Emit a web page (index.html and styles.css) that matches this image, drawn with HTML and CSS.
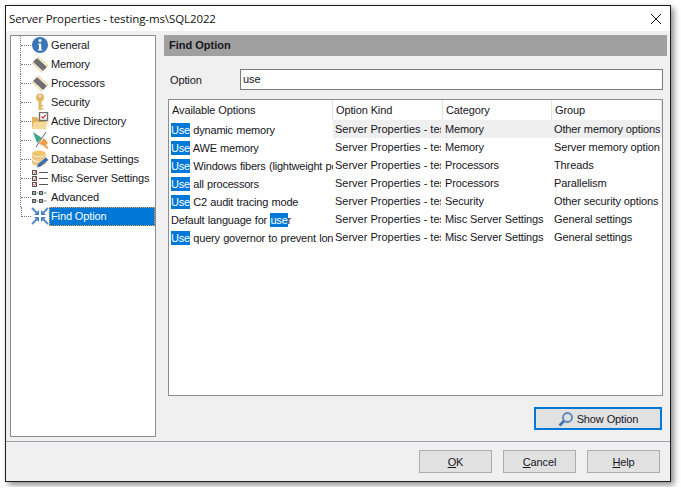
FILE: index.html

```html
<!DOCTYPE html>
<html lang="en">
<head>
  <meta charset="UTF-8">
  <title>Server Properties</title>
  <link rel="stylesheet" href="styles.css">
</head>
<body>
  <div class="window">
    <div class="titlebar">
      <span>Server Properties - testing-ms\SQL2022</span>
      <svg class="close" width="12" height="12" viewBox="0 0 12 12"><path d="M1 1 L11 11 M11 1 L1 11" stroke="#111" stroke-width="1" fill="none"/></svg>
    </div>
    <div class="main">
      <ul class="tree">
        <li class="node"><i class="twig"></i>
          <svg class="icon" viewBox="0 0 18 18"><circle cx="9" cy="9" r="8" fill="#3a76b6"/><circle cx="9" cy="4.600" r="1.500" fill="#fff"/><path d="M7 7.400h3.200v6h1.200v1.200H6.800v-1.200H8v-4.800H7z" fill="#fff"/></svg>
          <span class="label">General</span></li>
        <li class="node"><i class="twig"></i>
          <svg class="icon" viewBox="0 0 18 18"><path d="M2 7L6 3L16 12L12 16Z" fill="#6f6f72"/><path d="M1.500 8L6 12.500L11 17M7 2L12 6.500L17 11" stroke="#e6c06c" stroke-width="1.500" stroke-dasharray="1.200 .8" fill="none"/></svg>
          <span class="label">Memory</span></li>
        <li class="node"><i class="twig"></i>
          <svg class="icon" viewBox="0 0 18 18"><path d="M2 7L6 3L16 12L12 16Z" fill="#6f6f72"/><path d="M1.500 8L6 12.500L11 17M7 2L12 6.500L17 11" stroke="#e6c06c" stroke-width="1.500" stroke-dasharray="1.200 .8" fill="none"/></svg>
          <span class="label">Processors</span></li>
        <li class="node"><i class="twig"></i>
          <svg class="icon" viewBox="0 0 18 18"><circle cx="9" cy="4.500" r="4" fill="#e2b566"/><rect x="7.500" y="7" width="3" height="10" fill="#e2b566"/><rect x="10.500" y="12" width="2" height="1.500" fill="#e2b566"/><rect x="10.500" y="15" width="2" height="1.500" fill="#e2b566"/><rect x="7.600" y="2.400" width="2.800" height="1.400" fill="#fff"/></svg>
          <span class="label">Security</span></li>
        <li class="node"><i class="twig"></i>
          <svg class="icon" viewBox="0 0 18 18"><path d="M1 5h5l1.500 2H15v10H1z" fill="#e0b45c"/><path d="M2.500 10H17l-2.500 7H1z" fill="#f6d898"/><rect x="8.500" y="0.500" width="8" height="8" fill="#fff" stroke="#707070" stroke-width="1.400"/><path d="M10.500 4.500l1.500 1.500L14.800 2.800" stroke="#c8352b" stroke-width="1.200" fill="none"/></svg>
          <span class="label">Active Directory</span></li>
        <li class="node"><i class="twig"></i>
          <svg class="icon" viewBox="0 0 18 18"><path d="M2 1L11 7L6 12Z" fill="#3fa587"/><path d="M8 13L13 7L17 12L14 15Z" fill="#f09a48"/><path d="M13 14l4 3.500" stroke="#f09a48" stroke-width="1.800"/><path d="M15 1L5 16" stroke="#666" stroke-width="1"/></svg>
          <span class="label">Connections</span></li>
        <li class="node"><i class="twig"></i>
          <svg class="icon" viewBox="0 0 18 18"><ellipse cx="8" cy="3.500" rx="7" ry="3" fill="#f2c46a"/><path d="M1 4v9c0 1.600 3 3 7 3s7-1.400 7-3V4c0 1.600-3 3-7 3S1 5.600 1 4z" fill="#ecc887"/><path d="M1 8.500c0 1.600 3 3 7 3" stroke="#fff" fill="none"/><path d="M6 17.500l1-3.500 8-6.500 2.500 2.500-8 6.500z" fill="#3a6fb0"/></svg>
          <span class="label">Database Settings</span></li>
        <li class="node"><i class="twig"></i>
          <svg class="icon" viewBox="0 0 18 18"><g fill="#fff" stroke="#555"><rect x="1.500" y="1.500" width="4" height="4"/><rect x="1.500" y="7.500" width="4" height="4"/><rect x="1.500" y="13.500" width="4" height="4"/></g><path d="M2.500 3.500l1 1 2-3M2.500 9.500l1 1 2-3M2.500 15.500l1 1 2-3" stroke="#c8452f" fill="none"/><path d="M8 3.500h9M8 9.500h9M8 15.500h9" stroke="#555"/></svg>
          <span class="label">Misc Server Settings</span></li>
        <li class="node"><i class="twig"></i>
          <svg class="icon" viewBox="0 0 18 18"><g fill="#8fb5a0" stroke="#555"><rect x="1.500" y="3.500" width="3" height="3"/><rect x="8.500" y="3.500" width="3" height="3"/><rect x="1.500" y="11.500" width="3" height="3"/><rect x="8.500" y="11.500" width="3" height="3"/></g><path d="M5.500 5h2M12.500 5h3M5.500 13h2M12.500 13h3" stroke="#777"/></svg>
          <span class="label">Advanced</span></li>
        <li class="node"><i class="twig"></i>
          <svg class="icon" viewBox="0 0 18 18"><path d="M1 1L6 6M1 17L6 12M17 1L12 6M17 17L12 12" stroke="#5a8ec8" stroke-width="2"/><path d="M8 8H3L8 3ZM10 8H15L10 3ZM8 10H3L8 15ZM10 10H15L10 15Z" fill="#4f84c0"/></svg>
          <span class="label selected">Find Option</span></li>
      </ul>
      <div class="content">
        <h2 class="section-head">Find Option</h2>
        <div class="search-row">
          <label class="search-label">Option</label>
          <div class="search-input">use</div>
        </div>
        <div class="grid">
          <div class="row head">
            <div class="cell">Available Options</div>
            <div class="cell">Option Kind</div>
            <div class="cell">Category</div>
            <div class="cell">Group</div>
          </div>
          <div class="row current">
            <div class="cell first"><mark>Use</mark> dynamic memory</div>
            <div class="cell kind">Server Properties - testing-ms\SQL2022</div>
            <div class="cell">Memory</div>
            <div class="cell">Other memory options</div>
          </div>
          <div class="row">
            <div class="cell first"><mark>Use</mark> AWE memory</div>
            <div class="cell kind">Server Properties - testing-ms\SQL2022</div>
            <div class="cell">Memory</div>
            <div class="cell">Server memory options</div>
          </div>
          <div class="row">
            <div class="cell first"><mark>Use</mark> Windows fibers (lightweight pooling)</div>
            <div class="cell kind">Server Properties - testing-ms\SQL2022</div>
            <div class="cell">Processors</div>
            <div class="cell">Threads</div>
          </div>
          <div class="row">
            <div class="cell first"><mark>Use</mark> all processors</div>
            <div class="cell kind">Server Properties - testing-ms\SQL2022</div>
            <div class="cell">Processors</div>
            <div class="cell">Parallelism</div>
          </div>
          <div class="row">
            <div class="cell first"><mark>Use</mark> C2 audit tracing mode</div>
            <div class="cell kind">Server Properties - testing-ms\SQL2022</div>
            <div class="cell">Security</div>
            <div class="cell">Other security options</div>
          </div>
          <div class="row">
            <div class="cell first">Default language for <mark>use</mark>r</div>
            <div class="cell kind">Server Properties - testing-ms\SQL2022</div>
            <div class="cell">Misc Server Settings</div>
            <div class="cell">General settings</div>
          </div>
          <div class="row">
            <div class="cell first"><mark>Use</mark> query governor to prevent long-running queries</div>
            <div class="cell kind">Server Properties - testing-ms\SQL2022</div>
            <div class="cell">Misc Server Settings</div>
            <div class="cell">General settings</div>
          </div>
        </div>
        <div class="show-row">
          <button class="btn show-btn">
            <svg width="16" height="16" viewBox="0 0 16 16"><circle cx="9.500" cy="6.500" r="4.500" fill="none" stroke="#5a86b8" stroke-width="1.800"/><path d="M6 10L1.500 14.500" stroke="#3f72ad" stroke-width="2.600"/></svg>
            Show Option
          </button>
        </div>
      </div>
    </div>
    <div class="footer">
      <button class="btn"><u>O</u>K</button>
      <button class="btn"><u>C</u>ancel</button>
      <button class="btn"><u>H</u>elp</button>
    </div>
  </div>
</body>
</html>
```

FILE: styles.css

```css
html, body {
  margin: 0;
  background: #fff;
}
body {
  padding: 5px;
  font-family: "Liberation Sans", Arial, sans-serif;
  font-size: 11px;
  letter-spacing: -.12px;
  color: #16161c;
}
.window {
  width: 664px;
  height: 475px;
  border: 1px solid #1c1c1c;
  background: #f0f0f0;
  box-shadow: 3px 3px 6px rgba(0,0,0,.45);
  display: flex;
  flex-direction: column;
}
.titlebar {
  height: 25px;
  flex: none;
  background: #fff;
  display: flex;
  align-items: center;
  justify-content: space-between;
  padding: 0 8px 0 3px;
  font-family: "Open Sans", sans-serif;
  font-size: 11.5px;
  letter-spacing: -.1px;
  color: #111;
}
.main {
  height: 411px;
  flex: none;
  padding: 4px 3px 0 4px;
  display: flex;
  border-bottom: 1px solid #a0a0a8;
  box-sizing: border-box;
}
.tree {
  width: 146px;
  height: 402px;
  box-sizing: border-box;
  margin: 0;
  padding: 0 0 0 9px;
  list-style: none;
  background: #fff;
  border: 1px solid #8c8c96;
  flex: none;
}
.node {
  display: flex;
  height: 19px;
  border-left: 1px dotted #777;
}
.node:last-child {
  border-left: 0;
  padding-left: 1px;
}
.twig {
  width: 10px;
  height: 9px;
  border-bottom: 1px dotted #777;
  flex: none;
}
.node:last-child .twig {
  width: 9px;
  border-left: 1px dotted #777;
}
.icon {
  width: 18px;
  height: 18px;
  flex: none;
}
.label {
  padding: 3px 2px 0 2px;
  height: 16px;
  white-space: nowrap;
}
.selected {
  flex: 1;
  background: #0078d7;
  color: #fff;
  outline: 1px dotted #e0a050;
  outline-offset: -1px;
}
.content {
  flex: 1;
  margin-left: 8px;
  min-width: 0;
}
.section-head {
  margin: 0;
  height: 21px;
  line-height: 21px;
  padding-left: 5px;
  background: #a0a0a0;
  font-size: 11px;
  font-weight: bold;
  letter-spacing: 0;
}
.search-row {
  display: flex;
  align-items: center;
  margin-top: 13px;
  padding-left: 6px;
}
.search-label {
  width: 70px;
}
.search-input {
  width: 423px;
  height: 21px;
  box-sizing: border-box;
  border: 1px solid #7a7a7a;
  background: #fff;
  padding: 2px;
  line-height: 15px;
}
.grid {
  width: 495px;
  height: 297px;
  box-sizing: border-box;
  margin: 9px 0 0 4px;
  background: #fff;
  border: 1px solid #8c8c96;
}
.row {
  display: grid;
  grid-template-columns: 164px 110px 109px 110px;
  height: 18px;
  line-height: 18px;
}
.cell {
  overflow: hidden;
  white-space: nowrap;
  padding-left: 2px;
  border-right: 2px solid transparent;
}
.kind {
  letter-spacing: 0;
}
.head {
  height: 20px;
  line-height: 20px;
}
.head .cell {
  padding-left: 3px;
  border-right: 1px solid #e4e4e4;
}
.current {
  background: linear-gradient(#fff, #fff) 0 0 / 164px 100% no-repeat, #efefef;
}
.first {
  line-height: 20px;
  border-right: 0;
  letter-spacing: -.2px;
  word-spacing: .5px;
}
mark {
  background: #0078d7;
  color: #fff;
  padding: 1px 0;
}
.show-row {
  display: flex;
  justify-content: flex-end;
  margin-top: 11px;
  padding-right: 5px;
}
.btn {
  width: 73px;
  height: 23px;
  box-sizing: border-box;
  background: #e1e1e1;
  border: 1px solid #adadad;
  font-family: inherit;
  font-size: 11px;
  letter-spacing: inherit;
  color: #16161c;
  padding: 0;
}
.show-btn {
  width: 128px;
  border: 2px solid #0078d7;
  display: flex;
  align-items: center;
  justify-content: center;
  gap: 3px;
}
.footer {
  flex: 1;
  display: flex;
  justify-content: flex-end;
  gap: 11px;
  padding: 8px 10px 0 0;
}
```
